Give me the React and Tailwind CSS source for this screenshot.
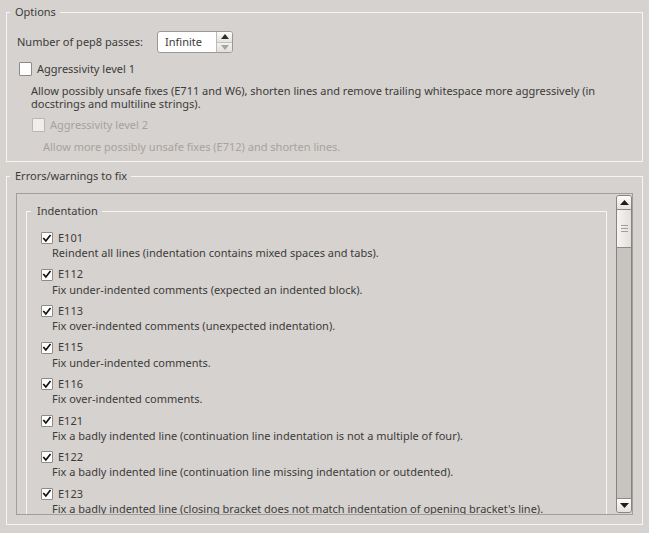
import { useState } from "react";

const items = [
  ["E101", "Reindent all lines (indentation contains mixed spaces and tabs)."],
  ["E112", "Fix under-indented comments (expected an indented block)."],
  ["E113", "Fix over-indented comments (unexpected indentation)."],
  ["E115", "Fix under-indented comments."],
  ["E116", "Fix over-indented comments."],
  ["E121", "Fix a badly indented line (continuation line indentation is not a multiple of four)."],
  ["E122", "Fix a badly indented line (continuation line missing indentation or outdented)."],
  ["E123", "Fix a badly indented line (closing bracket does not match indentation of opening bracket's line)."],
  ["E124", "Fix a badly indented line (closing bracket does not match visual indentation)."],
  ["E125", "Fix a badly indented line (continuation line with same indent as next logical line)."],
];

function Check({ size = "w-[13px] h-[13px]" }) {
  return (
    <svg viewBox="0 0 12 12" className={size}>
      <path d="M2.2 6.2 L4.6 9 L9.6 2.6" fill="none" stroke="#111" strokeWidth="2" strokeLinecap="square" />
    </svg>
  );
}

function Box({ checked, disabled, big, onClick }) {
  const dims = big ? "w-[13px] h-[14px]" : "w-[12px] h-[12px]";
  return (
    <span
      onClick={onClick}
      className={
        "flex items-center justify-center shrink-0 border rounded-[1px] " +
        dims +
        (disabled ? " bg-[#efeeed] border-[#b9b5b1]" : " bg-[#fdfdfd] border-[#8e8a86]")
      }
    >
      {checked && <Check size="w-[11px] h-[11px]" />}
    </span>
  );
}

function Legend({ children, wide }) {
  return (
    <legend className={(wide ? "ml-[4px] pl-[6px]" : "ml-[3px] pl-[5px]") + " pr-[4px] leading-[16px]"}>
      {children}
    </legend>
  );
}

export default function App() {
  const [checks, setChecks] = useState(items.map(() => true));
  const [aggr1, setAggr1] = useState(false);

  return (
    <div
      className="w-[649px] h-[533px] overflow-hidden bg-[#d6d2d0] text-[#3c3b37] text-[11px] pt-[4px]"
      style={{ fontFamily: "'Noto Sans', 'Open Sans', sans-serif" }}
    >
      <fieldset className="mx-[6px] border border-[#f6f5f4]">
        <Legend>Options</Legend>
        <div className="pl-[10px] pb-[8px]">
          <div className="mt-[11px] flex items-center h-[22px]">
            <span className="w-[140px] whitespace-nowrap">Number of pep8 passes:</span>
            <div className="w-[76px] h-[22px] flex bg-white border border-[#9c9894] rounded-[3px] overflow-hidden">
              <div className="flex-1 flex items-center pl-[7px]">Infinite</div>
              <div className="w-[16px] flex flex-col border-l border-[#bdb9b5]">
                <div className="flex-1 flex items-center justify-center bg-gradient-to-b from-[#fbfbfa] to-[#e6e4e2] border-b border-[#c4c0bc]">
                  <svg viewBox="0 0 8 5" className="w-[8px] h-[5px]">
                    <path d="M0 5 L4 0 L8 5 Z" fill="#2e2e2e" />
                  </svg>
                </div>
                <div className="flex-1 flex items-center justify-center bg-gradient-to-b from-[#f3f2f1] to-[#e2dfdc]">
                  <svg viewBox="0 0 8 5" className="w-[8px] h-[5px]">
                    <path d="M0 0 L8 0 L4 5 Z" fill="#a8a4a0" />
                  </svg>
                </div>
              </div>
            </div>
          </div>
          <div className="mt-[9px] flex items-center h-[14px] pl-[2px]">
            <Box big checked={aggr1} onClick={() => setAggr1(!aggr1)} />
            <span className="ml-[5px]">Aggressivity level 1</span>
          </div>
          <p className="mt-[8px] pl-[14px] leading-[13px] whitespace-nowrap">
            Allow possibly unsafe fixes (E711 and W6), shorten lines and remove trailing whitespace more aggressively (in
            <br />
            docstrings and multiline strings).
          </p>
          <div className="mt-[8px] flex items-center h-[14px] pl-[15px] text-[#a6a29e]">
            <Box big disabled />
            <span className="ml-[5px]">Aggressivity level 2</span>
          </div>
          <p className="mt-[8px] pl-[26px] leading-[13px] whitespace-nowrap text-[#a6a29e]">
            Allow more possibly unsafe fixes (E712) and shorten lines.
          </p>
        </div>
      </fieldset>

      <fieldset className="mt-[6px] mx-[6px] border border-[#f6f5f4]">
        <Legend>Errors/warnings to fix</Legend>
        <div className="px-[9px] pt-[9px] pb-[9px]">
          <div className="h-[322px] border border-[#a29e9a] flex">
            <div className="flex-1 overflow-hidden pt-[9px] pl-[9px] pr-[9px]">
              <fieldset className="border border-[#f6f5f4]">
                <Legend wide>Indentation</Legend>
                <div className="pl-[14px] pt-[12px]">
                  {items.map(([code, desc], i) => (
                    <div key={code} className="mb-[7.57px]">
                      <div className="flex items-center h-[14px]">
                        <Box
                          checked={checks[i]}
                          onClick={() => setChecks(checks.map((c, j) => (j === i ? !c : c)))}
                        />
                        <span className="ml-[5px]">{code}</span>
                      </div>
                      <div className="pl-[11px] leading-[15px] whitespace-nowrap">{desc}</div>
                    </div>
                  ))}
                </div>
              </fieldset>
            </div>
            <div className="w-[16px] my-[1px] flex flex-col border border-[#88847f] rounded-[3px] overflow-hidden bg-[#c7c3be]">
              <div className="h-[14px] flex items-center justify-center bg-gradient-to-b from-[#fdfdfc] to-[#e4e1de] border-b border-[#8e8a86]">
                <svg viewBox="0 0 9 5" className="w-[9px] h-[5px]">
                  <path d="M0 5 L4.5 0 L9 5 Z" fill="#1e1e1e" />
                </svg>
              </div>
              <div className="h-[38px] flex flex-col items-center justify-center gap-[2px] bg-gradient-to-r from-[#f6f5f4] to-[#e2dfdc] border-b border-[#8e8a86]">
                <span className="w-[7px] h-[1px] bg-[#a19d99]" />
                <span className="w-[7px] h-[1px] bg-[#a19d99]" />
                <span className="w-[7px] h-[1px] bg-[#a19d99]" />
              </div>
              <div className="flex-1" />
              <div className="h-[14px] flex items-center justify-center bg-gradient-to-b from-[#fdfdfc] to-[#e4e1de] border-t border-[#8e8a86]">
                <svg viewBox="0 0 9 5" className="w-[9px] h-[5px]">
                  <path d="M0 0 L9 0 L4.5 5 Z" fill="#1e1e1e" />
                </svg>
              </div>
            </div>
          </div>
        </div>
      </fieldset>
    </div>
  );
}
